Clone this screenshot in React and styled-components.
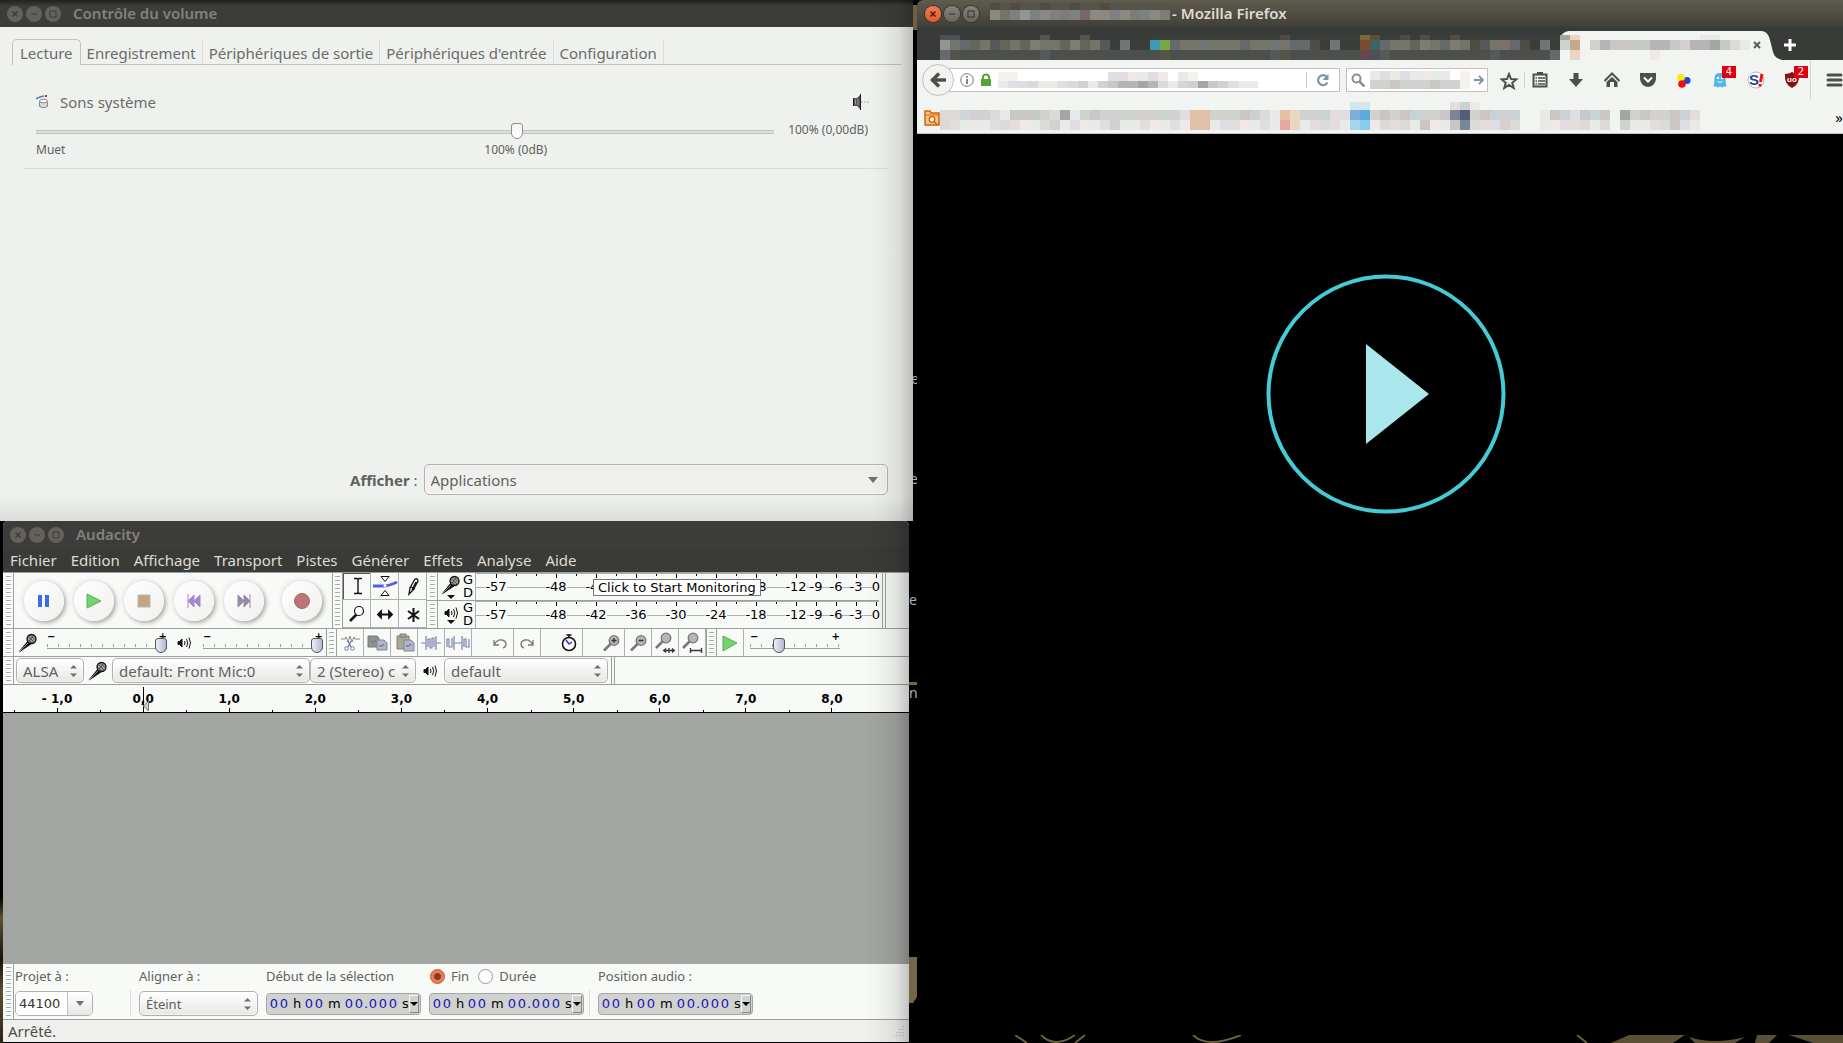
import React, { useState } from "react";
import styled, { createGlobalStyle, css } from "styled-components";

const App = () => {
  return (
    <>
      <GlobalStyle />
      <Desktop>
        <LeftColumn>
          <VolumeControl />
          <Audacity />
        </LeftColumn>
        <WallpaperGap />
        <RightColumn>
          <Firefox />
          <WallpaperFloor />
        </RightColumn>
      </Desktop>
    </>
  );
};

export default App;

/* ---------- shared pieces ---------- */

const TitleButtons = ({ active }) => (
  <TitleButtonGroup>
    <RoundButton aria-label="Fermer" $tone={active ? "close" : "off"}>
      <svg width="8" height="8" viewBox="0 0 8 8"><path d="M1.500 1.500l5 5M6.500 1.500l-5 5" stroke="currentColor" strokeWidth="1.500" /></svg>
    </RoundButton>
    <RoundButton aria-label="Réduire" $tone={active ? "on" : "off"}>
      <svg width="8" height="8" viewBox="0 0 8 8"><path d="M1 4h6" stroke="currentColor" /></svg>
    </RoundButton>
    <RoundButton aria-label="Agrandir" $tone={active ? "on" : "off"}>
      <svg width="8" height="8" viewBox="0 0 8 8"><rect x="1" y="1" width="6" height="6" fill="none" stroke="currentColor" /></svg>
    </RoundButton>
  </TitleButtonGroup>
);

const palette = {
  a: "#dcd9d9", b: "#cfd5d8", c: "#d5d0d0", d: "#d0d2cf", e: "#e8eae7", f: "#c6c9c6",
  g: "#a4a6a4", h: "#cbc5c3", i: "#cbd2d6", j: "#e0dde5", k: "#e1c0a9", l: "#e4c1a0",
  m: "#ead5c4", n: "#7bb1d8", o: "#5cabdc", p: "#77869a", q: "#575c77", r: "#e6a79c",
  s: "#a5d5ea", t: "#89cbee", u: "#efe8e6", v: "#b5b5b5", w: "#e3dddd", x: "#f6f0ee",
  y: "#c3a88c", z: "#d3e7ee",
  A: "#93958f", B: "#707673", C: "#666a6c", D: "#757469", E: "#7e7d73", F: "#66655b",
  G: "#56595a", H: "#4f4d43", I: "#3b3d3a", J: "#3c9ab5", K: "#7ca645", L: "#7d4a2b",
  M: "#3a6560", N: "#7d6f6b", O: "#4d4f4c", P: "#7a6936", Q: "#5c5136", R: "#654750",
  S: "#504f58", T: "#8b8983", U: "#7e8082", V: "#8f877d", W: "#766867", X: "#55544b",
};

// rows: [{ h, cells }], one letter for each 10px block
const Mosaic = ({ rows }) => {
  const cols = Math.max(...rows.map((r) => r.cells.length));
  const height = rows.reduce((sum, r) => sum + r.h, 0);
  let y = 0;
  return (
    <MosaicSvg width={cols * 10} height={height} shapeRendering="crispEdges" aria-hidden="true">
      {rows.map((row, i) => {
        const top = y;
        y += row.h;
        return row.cells.split("").map((c, j) =>
          palette[c] ? <rect key={`${i}-${j}`} x={j * 10} y={top} width="10" height={row.h} fill={palette[c]} /> : null
        );
      })}
    </MosaicSvg>
  );
};

const MicIcon = () => (
  <svg width="20" height="20" viewBox="0 0 20 20">
    <path d="M1 19l9-11 3 3z" fill="#111" stroke="#111" />
    <path d="M1 19l9-9" stroke="#888" />
    <circle cx="13.500" cy="6" r="4.500" fill="#9a9c9a" stroke="#111" strokeWidth="1.300" />
    <path d="M11 4l5 5M13 2.500l4 4M10 7l4 3M11 8l5-6" stroke="#333" strokeWidth=".7" />
  </svg>
);

const SpeakerIcon = () => (
  <svg width="14" height="14" viewBox="0 0 14 14" fill="none" stroke="#111">
    <path d="M1 5.500h1.500L5 3v8L2.500 8.500H1z" fill="#111" />
    <path d="M7.500 5q1 2 0 4M9.500 3q2.500 4 0 8M12 1.500q3 5.500 0 11" />
  </svg>
);

/* ---------- volume control ---------- */

const volumeTabs = ["Lecture", "Enregistrement", "Périphériques de sortie", "Périphériques d'entrée", "Configuration"];

const VolumeControl = () => {
  const [tab, setTab] = useState("Lecture");
  const [volume, setVolume] = useState(100);

  return (
    <VolumeWindow>
      <TitleBar>
        <TitleButtons />
        <WindowTitle>Contrôle du volume</WindowTitle>
      </TitleBar>
      <VolumeBody>
        <Notebook role="tablist">
          {volumeTabs.map((t) => (
            <NotebookTab key={t} role="tab" aria-selected={t === tab} $active={t === tab} onClick={() => setTab(t)}>
              {t}
            </NotebookTab>
          ))}
          <NotebookFill />
        </Notebook>
        <Stream>
          <StreamHeader>
            <svg width="14" height="14" viewBox="0 0 14 14">
              <path d="M0 4q3-2.500 8-3" stroke="#4a7dc0" strokeWidth="1.600" fill="none" />
              <rect x="9" y="0" width="2" height="2" fill="#d02020" />
              <path d="M3.500 6.500v5q4 2.500 8 0v-5" fill="#d8dad8" stroke="#888" />
              <ellipse cx="7.500" cy="6" rx="4" ry="1.800" fill="#fff" stroke="#888" />
            </svg>
            <StreamName id="stream">Sons système</StreamName>
            <MuteButton aria-label="Couper le son">
              <svg width="16" height="16" viewBox="0 0 16 16">
                <path d="M0 4h4l3.500-3.500v15L4 12H0z" fill="#555" />
                <path d="M7.500 0v16M.5 4v8" stroke="#1a1a1a" />
                <path d="M2.500 5.500v5M5 5v6" stroke="#999" />
                <path d="M8 8h8" stroke="#aaa" strokeDasharray="2 1" />
              </svg>
            </MuteButton>
          </StreamHeader>
          <StreamSlider>
            <SliderTrack>
              <VolumeRange
                type="range"
                aria-labelledby="stream"
                max="153"
                value={volume}
                onChange={(e) => setVolume(Number(e.target.value))}
              />
              <SliderMarks>
                <span>Muet</span>
                <BaseMark>100% (0dB)</BaseMark>
              </SliderMarks>
            </SliderTrack>
            <VolumeValue>100% (0,00dB)</VolumeValue>
          </StreamSlider>
        </Stream>
        <ShowRow>
          <ShowLabel htmlFor="show"><b>Afficher</b> :</ShowLabel>
          <ComboBox $grow>
            <ComboSelect id="show" defaultValue="Applications">
              <option>Applications</option>
            </ComboSelect>
            <ComboArrow width="10" height="6" viewBox="0 0 10 6"><path d="M0 0h10l-5 6z" fill="#6e706c" /></ComboArrow>
          </ComboBox>
        </ShowRow>
      </VolumeBody>
    </VolumeWindow>
  );
};

/* ---------- audacity ---------- */

const menus = ["Fichier", "Edition", "Affichage", "Transport", "Pistes", "Générer", "Effets", "Analyse", "Aide"];

const transport = [
  { name: "Pause", art: <path d="M6 6h4v12H6zM13 6h4v12h-4z" fill="#3f6ae6" /> },
  { name: "Lecture", art: <path d="M5 5l14 7-14 7z" fill="#72d46a" stroke="#5cae58" /> },
  { name: "Arrêt", art: <path d="M6 6h12v12H6z" fill="#bfa58c" stroke="#c8b39d" /> },
  { name: "Début", art: <path d="M6 5v14M12 6v12l-6-6zM18 6v12l-6-6z" fill="#a488d0" stroke="#a488d0" /> },
  { name: "Fin", art: <path d="M18 5v14M6 6v12l6-6zM12 6v12l6-6z" fill="#988ba8" stroke="#988ba8" /> },
];

const tools = [
  { name: "Sélection", art: <path d="M10 5.500h3l1 1 1-1h3M14 6v14M10 20.500h3l1-1 1 1h3" stroke="#111" strokeWidth="1.400" fill="none" /> },
  {
    name: "Niveau",
    art: (
      <>
        <path d="M1 13h10q6 0 14-4" stroke="#5560e0" strokeWidth="3" fill="none" />
        <path d="M9 3.500h8l-4 5zM9 22.500h8l-4-5z" fill="#fff" stroke="#111" />
        <circle cx="13" cy="12.500" r="1.500" fill="#fff" />
      </>
    ),
  },
  { name: "Crayon", art: <path d="M9 21l1-6 5-9q3-1 3 2l-5 9zM11 14l4 2M12 17l4-8" stroke="#111" strokeWidth="1.300" fill="#fff" /> },
  {
    name: "Zoom",
    art: (
      <>
        <path d="M6 20l7-7" stroke="#111" strokeWidth="2.500" />
        <circle cx="15" cy="10" r="4.500" fill="#fff" stroke="#111" strokeWidth="1.200" />
      </>
    ),
  },
  { name: "Glissement", art: <path d="M6 13.500h14M9 10.500l-3 3 3 3zM17 10.500l3 3-3 3z" stroke="#111" strokeWidth="1.800" /> },
  { name: "Multi-outils", art: <path d="M13.500 7v14M8 10l11 8M19 10L8 18" stroke="#111" strokeWidth="2" /> },
];

const editGroups = [
  [
    {
      name: "Couper",
      art: (
        <>
          <path d="M4 9h4l1-2 2 5 2-6 2 6 2-5 1 2h5" stroke="#888" fill="none" />
          <path d="M14 11l-3 6M11 11l3 6" stroke="#6f78a8" strokeWidth="1.300" />
          <circle cx="9.500" cy="18.500" r="1.800" fill="none" stroke="#6f78a8" />
          <circle cx="15.500" cy="18.500" r="1.800" fill="none" stroke="#6f78a8" />
        </>
      ),
    },
    {
      name: "Copier",
      art: (
        <>
          <path d="M4 6h9l2 2v9H4z" fill="#8f918f" stroke="#777" />
          <path d="M13 10h7l3 3v7H13z" fill="#b3b6c6" stroke="#7d84a8" />
          <path d="M6 12l2-1 1 2 2-3 1 2M15 16l1-1 1 2 2-3 1 2" fill="none" stroke="#777" />
        </>
      ),
    },
    {
      name: "Coller",
      art: (
        <>
          <path d="M6 6h12v13H6z" fill="#a9a88c" stroke="#85846c" />
          <path d="M9 4h6v3H9z" fill="#aaa" stroke="#777" />
          <path d="M13 10h7l3 3v8H13z" fill="#b3b6c6" stroke="#7d84a8" />
          <path d="M15 16l1-1 1 2 2-3 1 2" fill="none" stroke="#777" />
        </>
      ),
    },
    { name: "Rogner", art: <path d="M3 13h5M18 13h5M8 6v14M18 6v14M10 17V9h2v9h2V8h2v9" stroke="#7a82ae" fill="none" strokeWidth="1.200" /> },
    { name: "Silence", art: <path d="M9 13h8M9 6v14M17 6v14M2 17V9h2v8h3V8M19 17V9h2v8h3V9" stroke="#7a82ae" fill="none" strokeWidth="1.200" /> },
  ],
  [
    { name: "Annuler", art: <path d="M7 10v5h5M7 15q3-6 8-5 4 1 4 4 0 3-3 4" stroke="#777" fill="none" strokeWidth="1.300" /> },
    { name: "Rétablir", art: <path d="M19 10v5h-5M19 15q-3-6-8-5-4 1-4 4 0 3 3 4" stroke="#777" fill="none" strokeWidth="1.300" /> },
  ],
  [
    {
      name: "Minuterie",
      art: (
        <>
          <circle cx="13" cy="14" r="6.500" fill="#fff" stroke="#111" strokeWidth="1.600" />
          <path d="M13 8V5M10.500 5h5" stroke="#111" strokeWidth="1.600" />
          <path d="M10 10l3 4 3-2" stroke="#3a30e0" fill="none" strokeWidth="1.500" />
        </>
      ),
    },
  ],
  [
    { name: "Zoom avant", art: <Lens mark="M13.500 10.500h5M16 8v5" /> },
    { name: "Zoom arrière", art: <Lens mark="M13.500 10.500h5" /> },
    { name: "Ajuster la sélection", art: <Lens high mark="M11 20.500h12M14 18.500l-2 2 2 2M20 18.500l2 2-2 2M17 18v5" /> },
    { name: "Ajuster le projet", art: <Lens high mark="M11 20.500h12M11.500 18v5M22.500 18v5" /> },
  ],
];

function Lens({ mark, high }) {
  const cx = high ? 14 : 16;
  const cy = high ? 8 : 10.5;
  return (
    <>
      <path d={`M${cx - 10} ${cy + 10}l7-7`} stroke="#777" strokeWidth="2.500" />
      <circle cx={cx} cy={cy} r="4.800" fill="#b5b7b5" stroke="#777" strokeWidth="1.300" />
      <path d={mark} stroke="#333" strokeWidth="1.300" fill="none" />
    </>
  );
}

const ToolIcon = ({ art }) => <svg width="26" height="26" viewBox="0 0 26 26">{art}</svg>;

const meterMarks = ["-57", "", "", "-48", "", "-42", "", "-36", "", "-30", "", "-24", "", "-18", "", "-12", "-9", "-6", "-3", "0"];

const Meter = ({ label, icon, tooltip }) => (
  <MeterRow>
    <Grip />
    <MeterMenu aria-label={label}>
      {icon}
      <svg width="8" height="4" viewBox="0 0 8 4"><path d="M0 0h8L4 4z" fill="#111" /></svg>
    </MeterMenu>
    <Channels><span>G</span><span>D</span></Channels>
    <MeterScale>
      {meterMarks.map((m, i) => (
        <MeterCell key={i} $major={m !== ""}>{m && <span>{m}</span>}</MeterCell>
      ))}
      {tooltip && <Tooltip role="tooltip">{tooltip}</Tooltip>}
    </MeterScale>
  </MeterRow>
);

const MixerSlider = ({ label, value, short }) => {
  const [level, setLevel] = useState(value);
  return (
    <MixerBox $short={short}>
      <MixerSigns><span>−</span><span>+</span></MixerSigns>
      <MixerRange type="range" aria-label={label} value={level} onChange={(e) => setLevel(Number(e.target.value))} />
    </MixerBox>
  );
};

const Spinner = () => (
  <ComboArrow width="7" height="12" viewBox="0 0 7 12">
    <path d="M0 3.500h7L3.500 0zM0 8.500h7L3.500 12z" fill="#6e706c" />
  </ComboArrow>
);

const DeviceSelect = ({ label, value, width }) => (
  <ComboBox $width={width} $device>
    <ComboSelect aria-label={label} defaultValue={value}>
      <option>{value}</option>
    </ComboSelect>
    <Spinner />
  </ComboBox>
);

const TimeField = ({ label }) => (
  <TimeBox>
    <TimeDigits aria-label={label}>
      {"00 h 00 m 00.000 s".split("").map((c, i) => (
        <TimeCell key={i} $char={c}>{c}</TimeCell>
      ))}
    </TimeDigits>
    <TimeMenu aria-label="Format">
      <svg width="8" height="4" viewBox="0 0 8 4"><path d="M0 0h8L4 4z" fill="#000" /></svg>
    </TimeMenu>
  </TimeBox>
);

const ruler = ["- 1,0", "0,0", "1,0", "2,0", "3,0", "4,0", "5,0", "6,0", "7,0", "8,0"];

const Audacity = () => {
  const [mode, setMode] = useState("fin");

  return (
    <AudacityWindow>
      <TitleBar $flat>
        <TitleButtons />
        <WindowTitle>Audacity</WindowTitle>
      </TitleBar>
      <MenuBar>
        {menus.map((m) => <MenuItem key={m}>{m}</MenuItem>)}
      </MenuBar>

      <TopDock>
        <Grip />
        <Transport>
          {transport.map((b) => (
            <BigButton key={b.name} aria-label={b.name}>
              <svg width="24" height="24" viewBox="0 0 24 24">{b.art}</svg>
            </BigButton>
          ))}
          <BigButton aria-label="Enregistrer" $record>
            <svg width="24" height="24" viewBox="0 0 24 24"><circle cx="12" cy="12" r="7.500" fill="#bd7478" stroke="#a5666a" /></svg>
          </BigButton>
        </Transport>
        <Grip $edge />
        <ToolGrid>
          {tools.map((t, i) => (
            <ToolButton key={t.name} aria-label={t.name} $pressed={i === 0}><ToolIcon art={t.art} /></ToolButton>
          ))}
        </ToolGrid>
        <Meters>
          <Meter label="Enregistrement" icon={<MicIcon />} tooltip="Click to Start Monitoring" />
          <Meter label="Lecture" icon={<SpeakerIcon />} />
        </Meters>
        <DockEnd />
      </TopDock>

      <DockRow>
        <Grip />
        <MixerIcon><MicIcon /></MixerIcon>
        <MixerSlider label="Volume d'enregistrement" value={100} />
        <MixerIcon><SpeakerIcon /></MixerIcon>
        <MixerSlider label="Volume de lecture" value={100} />
        <Grip $edge />
        {editGroups.map((group, i) => (
          <EditGroup key={i}>
            {group.map((b) => <ToolButton key={b.name} aria-label={b.name}><ToolIcon art={b.art} /></ToolButton>)}
          </EditGroup>
        ))}
        <Grip $edge />
        <ToolButton aria-label="Lire à vitesse">
          <ToolIcon art={<path d="M6 6l14 7-14 8z" fill="#72d46a" stroke="#5cae58" />} />
        </ToolButton>
        <MixerSlider label="Vitesse" value={30} short />
      </DockRow>

      <DockRow $devices>
        <Grip />
        <DeviceSelect label="Hôte audio" value="ALSA" width={68} />
        <MixerIcon><MicIcon /></MixerIcon>
        <DeviceSelect label="Périphérique d'enregistrement" value="default: Front Mic:0" width={198} />
        <DeviceSelect label="Canaux" value="2 (Stereo) c" width={106} />
        <MixerIcon><SpeakerIcon /></MixerIcon>
        <DeviceSelect label="Périphérique de lecture" value="default" width={164} />
        <DockEnd />
      </DockRow>

      <Ruler>
        {ruler.map((r, i) => (
          <RulerCell key={r} $cursor={i === 1}>
            {r}
            <RulerTicks />
            {i === 1 && (
              <Playhead width="6" height="12" viewBox="0 0 6 12"><path d="M5.500 1v10L.5 6z" fill="#c8cac7" stroke="#777" /></Playhead>
            )}
          </RulerCell>
        ))}
      </Ruler>
      <Tracks />

      <SelectionBar>
        <Grip />
        <RateField>
          <label htmlFor="rate">Projet à :</label>
          <RateCombo>
            <RateInput id="rate" defaultValue="44100" />
            <RateButton aria-label="Fréquences">
              <svg width="8" height="5" viewBox="0 0 8 5"><path d="M0 0h8L4 5z" fill="#6e706c" /></svg>
            </RateButton>
          </RateCombo>
        </RateField>
        <BarSeparator />
        <Field>
          <label htmlFor="snap">Aligner à :</label>
          <ComboBox $width={119} $device>
            <ComboSelect id="snap" defaultValue="Éteint"><option>Éteint</option></ComboSelect>
            <Spinner />
          </ComboBox>
        </Field>
        <Field>
          <span>Début de la sélection</span>
          <TimeField label="Début de la sélection" />
        </Field>
        <Field>
          <RadioRow>
            <RadioLabel>
              <Radio type="radio" name="mode" checked={mode === "fin"} onChange={() => setMode("fin")} />
              Fin
            </RadioLabel>
            <RadioLabel>
              <Radio type="radio" name="mode" checked={mode === "duree"} onChange={() => setMode("duree")} />
              Durée
            </RadioLabel>
          </RadioRow>
          <TimeField label="Fin de la sélection" />
        </Field>
        <BarSeparator />
        <Field>
          <span>Position audio :</span>
          <TimeField label="Position audio" />
        </Field>
      </SelectionBar>
      <StatusBar>
        Arrêté.
        <svg width="12" height="12" viewBox="0 0 12 12">
          <path d="M10 1v11M7 4v8M4 7v5M1 10v2" stroke="#b5b7b5" strokeDasharray="1 2" />
        </svg>
      </StatusBar>
    </AudacityWindow>
  );
};

/* ---------- firefox ---------- */

const tabArt = [
  [{ h: 5, cells: "SS........X...X" }, { h: 10, cells: "ABCFDGFDFEDDFEFDGIBII" }, { h: 10, cells: "CXOOOOOOOOGOOOOOOOOOO" }],
  [{ h: 5, cells: "IIIIIIIIIIIIIHIIIIIII" }, { h: 10, cells: "JKCDDBDDDCDDBDCCHIBII" }, { h: 10, cells: "OXOOOOOOOOOOGXOOOOOOO" }],
  [{ h: 5, cells: "PQIIHIHIIHIIIIIIIIII" }, { h: 10, cells: "LMCDDFEDCEDHGDNCHIBI" }, { h: 10, cells: "RSGOOOOOOOOOOGOOOOOC" }],
];

const activeArt = [
  { h: 5, cells: "gmx...........ee..." },
  { h: 10, cells: "dy.cvhhffvvfcvvgfae" },
  { h: 10, cells: ".mx......u........." },
];

const titleArt = [
  { h: 7, cells: "HXHXXHXXHXXHXXXXXX" },
  { h: 10, cells: "TDUAUTUEUWTVUTEUTE" },
];

const urlArt = [
  { h: 9, cells: "xx.........jjueju.ex......." },
  { h: 7, cells: "ejjaeujadecfvvgvaebdgfdjee" },
];

const searchArt = [
  { h: 9, cells: "ewejeuee.x" },
  { h: 9, cells: "cdhdcdhddx" },
];

const bookmarkArt = [
  { h: 8, cells: ".........................................zz........wiu" },
  { h: 10, cells: "aabcdaefffdagedfddddcdddjkkdddhiaelmdciwjnochdhiddhpqdhici..ehijfih.gdhcdhiw" },
  { h: 10, cells: "aweeejawueadejuejdeewuejukkejwuejermewawestuawaehuehpawjca..euwwaea.deewahje" },
];

const addons = [
  { name: "Marque-pages", art: <><path d="M4.500 5.500h13v12h-13zM8 4h6" stroke="#4d4f4c" strokeWidth="2" fill="none" /><path d="M9 9h7M9 12h7M9 15h7M6.500 9h1.500M6.500 12H8M6.500 15H8" stroke="#4d4f4c" strokeWidth="1.500" /></> },
  { name: "Téléchargements", art: <path d="M8.500 4h5v6H18l-7 8-7-8h4.500z" fill="#4d4f4c" /> },
  { name: "Accueil", art: <><path d="M3.500 12L11 4.500l7.500 7.500" stroke="#4d4f4c" strokeWidth="2" fill="none" /><path d="M5.500 13L11 8l5.500 5v5H13v-5H9v5H5.500z" fill="#4d4f4c" /></> },
  { name: "Pocket", art: <><path d="M3 4h16v6q-1 7-8 8-7-1-8-8z" fill="#4d4f4c" /><path d="M7 8.500l4 4 4-4" stroke="#fff" strokeWidth="2" fill="none" /></> },
  { name: "Filtres", art: <><circle cx="14" cy="11.500" r="3.500" fill="#2640d8" /><circle cx="8" cy="8.500" r="3.800" fill="#f4ee10" /><circle cx="9" cy="15" r="3.800" fill="#f01010" /></> },
  { name: "Ghostery", badge: "4", art: <><path d="M4.500 18q1-4 1-9 0-5 5.500-5t5.500 5q0 5 1 9l-2.500-1-1.500 1.500-2.500-1-2.500 1-1.500-1.500z" fill="#4db6ea" /><circle cx="9" cy="9" r="1.200" fill="#fff" /><circle cx="13" cy="9" r="1.200" fill="#fff" /><path d="M8.500 12.500q2.500 2 5 0" stroke="#fff" fill="none" /></> },
  { name: "Stylish", art: <><circle cx="11" cy="11" r="8" fill="#fff" stroke="#bbb" /><text x="4" y="16" fontFamily="Liberation Sans, sans-serif" fontSize="15" fontWeight="bold" fill="#1d4b8f">S</text><path d="M17 5l-1.500 8M15 15v2.500" stroke="#f01010" strokeWidth="3" /></> },
  { name: "uBlock", badge: "2", art: <><path d="M11 3q3 2 7 2 1 10-7 14Q3 15 4 5q4 0 7-2z" fill="#8a0f14" /><text x="6" y="13" fontFamily="Liberation Sans, sans-serif" fontSize="8" fontWeight="bold" fill="#fff">uo</text></> },
];

const Firefox = () => (
  <BrowserWindow>
    <BrowserTitle>
      <TitleButtons active />
      <TitleMosaic><Mosaic rows={titleArt} /></TitleMosaic>
      <WindowTitle $light>- Mozilla Firefox</WindowTitle>
    </BrowserTitle>
    <TabStrip>
      {tabArt.map((rows, i) => <BrowserTab key={i} aria-label={`Onglet ${i + 1}`}><Mosaic rows={rows} /></BrowserTab>)}
      <ActiveTab>
        <Mosaic rows={activeArt} />
        <TabClose aria-label="Fermer l'onglet">
          <svg width="8" height="8" viewBox="0 0 8 8"><path d="M1 1l6 6M7 1L1 7" stroke="#5a5c59" strokeWidth="2" /></svg>
        </TabClose>
      </ActiveTab>
      <svg width="22" height="29" viewBox="0 0 22 29"><path d="M0 0q7 0 9 9l3 12q2 7 10 8H0z" fill="#f2f4f1" /></svg>
      <NewTab aria-label="Nouvel onglet">
        <svg width="14" height="14" viewBox="0 0 14 14"><path d="M7 1v12M1 7h12" stroke="#fff" strokeWidth="3" /></svg>
      </NewTab>
    </TabStrip>
    <NavBar>
      <BackButton aria-label="Précédent">
        <svg width="18" height="18" viewBox="0 0 18 18"><path d="M10 2.500L3.500 9l6.500 6.500M4 9h13" stroke="#4d4f4c" strokeWidth="3.500" fill="none" /></svg>
      </BackButton>
      <UrlBar>
        <svg width="14" height="14" viewBox="0 0 14 14"><circle cx="7" cy="7" r="6.300" fill="none" stroke="#777" /><path d="M7 6v5M7 3v1.800" stroke="#777" strokeWidth="1.800" /></svg>
        <svg width="12" height="14" viewBox="0 0 12 14"><path d="M1 6h10v7H1z" fill="#55a53c" /><path d="M3 7V4q0-2.500 3-2.500T9 4v3" stroke="#55a53c" strokeWidth="2" fill="none" /></svg>
        <Mosaic rows={urlArt} />
        <ReloadButton aria-label="Actualiser">
          <svg width="14" height="14" viewBox="0 0 14 14"><path d="M11.500 9.500a5 5 0 1 1-.5-5.500" stroke="#7a96a8" strokeWidth="2.200" fill="none" /><path d="M12.500 1v6h-6z" fill="#7a96a8" /></svg>
        </ReloadButton>
      </UrlBar>
      <SearchBar>
        <svg width="14" height="14" viewBox="0 0 14 14"><circle cx="5.500" cy="5.500" r="4" fill="none" stroke="#8c8e8c" strokeWidth="2" /><path d="M8.500 8.500l5 5" stroke="#8c8e8c" strokeWidth="2.500" /></svg>
        <Mosaic rows={searchArt} />
        <svg width="10" height="10" viewBox="0 0 10 10"><path d="M0 5h8M5 1l4 4-4 4" stroke="#7a96a8" strokeWidth="1.800" fill="none" /></svg>
      </SearchBar>
      <Star aria-label="Ajouter aux marque-pages">
        <svg width="18" height="18" viewBox="0 0 18 18"><path d="M9 2l2 5 5.500.3-4.200 3.500 1.400 5.200L9 13l-4.700 3 1.400-5.200L1.500 7.300 7 7z" fill="none" stroke="#4d4f4c" strokeWidth="2" /></svg>
      </Star>
      {addons.map((a) => (
        <AddonButton key={a.name} aria-label={a.name}>
          <svg width="22" height="22" viewBox="0 0 22 22">{a.art}</svg>
          {a.badge && <Badge>{a.badge}</Badge>}
        </AddonButton>
      ))}
      <Hamburger aria-label="Menu">
        <svg width="17" height="14" viewBox="0 0 17 14"><path d="M2 2h13M2 7h13M2 12h13" stroke="#4d4f4c" strokeWidth="3" strokeLinecap="round" /></svg>
      </Hamburger>
    </NavBar>
    <BookmarkBar>
      <svg width="16" height="16" viewBox="0 0 16 16">
        <path d="M1 15V1h5l1 2h8v12z" fill="#f3c88c" stroke="#cf6408" strokeWidth="1.500" />
        <path d="M1 5h14" stroke="#cf6408" />
        <circle cx="8" cy="9.500" r="2.800" fill="#fff3e0" stroke="#cf6408" strokeWidth="1.300" />
        <path d="M10 11.500l3 3" stroke="#cf6408" strokeWidth="1.500" />
      </svg>
      <Mosaic rows={bookmarkArt} />
      <Overflow aria-label="Plus de marque-pages">»</Overflow>
    </BookmarkBar>
    <Page>
      <PlayButton aria-label="Lire la vidéo">
        <svg width="240" height="240" viewBox="0 0 240 240">
          <circle cx="120" cy="120" r="117.500" fill="none" stroke="#43ccd6" strokeWidth="4" />
          <path d="M100 70l63 50-63 50z" fill="#a9e7ec" />
        </svg>
      </PlayButton>
    </Page>
  </BrowserWindow>
);

/* ---------- wallpaper ---------- */

const WallpaperGap = () => (
  <GapSvg width="4" height="1043" aria-hidden="true">
    <path d="M0 5h4v25H0z" fill="#6b6040" />
    <path d="M-4 682h8v3h-8zM-4 957h8v40l-4 6h-4z" fill="#746748" />
    <g fontFamily="Noto Sans, sans-serif" fontSize="14" fill="#a9aeb4">
      <text x="-2" y="384">e</text>
      <text x="-3" y="484">e</text>
      <text x="-4" y="605">e</text>
      <text x="-4" y="698">n</text>
    </g>
  </GapSvg>
);

const WallpaperFloor = () => (
  <svg width="100%" height="8" viewBox="0 0 926 8" preserveAspectRatio="xMidYMid slice" aria-hidden="true">
    <g stroke="#6b5f3e" strokeWidth="2" fill="none">
      <path d="M98 0l12 8M124 0q14 14 34 0M168 0l-10 8M276 0q14 14 48 0M660 0l10 8M700 8l16-8" />
    </g>
    <path d="M712 0h56l-12 8h-62zM772 2q24 8 56 0l-10 6h-40zM840 0h20l-8 8h-14zM872 0h54v8h-30z" fill="#5b5036" />
  </svg>
);

/* ---------- styles ---------- */

const ui = `"Noto Sans", "Open Sans", sans-serif`;
const dejavu = `"DejaVu Sans", sans-serif`;

const GlobalStyle = createGlobalStyle`
  *, *::before, *::after {
    box-sizing: border-box;
  }
  body {
    margin: 0;
    background: #000;
    font-family: ${ui};
    font-size: 15px;
    color: #5f615d;
    overflow: hidden;
  }
  button {
    border: 0;
    padding: 0;
    background: none;
    font: inherit;
    color: inherit;
  }
  svg {
    display: block;
    flex: none;
  }
`;

const Desktop = styled.div`
  display: grid;
  grid-template-columns: minmax(0, 913fr) 4px minmax(0, 926fr);
  min-height: 100vh;
  background: #000;
`;

const GapSvg = styled.svg`
  overflow: visible;
`;

const LeftColumn = styled.div`
  display: flex;
  flex-direction: column;
  background: linear-gradient(#000 86%, #5b5036 88%, #17140e 92%, #5b5036 95%, #2a2417) left / 3px 100% no-repeat;
`;

const RightColumn = styled.div`
  z-index: 1;
  display: flex;
  flex-direction: column;
  overflow: hidden;
  background: #000;
`;

const windowBase = css`
  position: relative;
  z-index: 1;
  display: flex;
  flex-direction: column;

  /* shade cast by the browser window */
  &::after {
    content: "";
    position: absolute;
    inset: 0;
    pointer-events: none;
    background: linear-gradient(to left, rgba(0, 0, 0, 0.22), rgba(0, 0, 0, 0.08) 14px, rgba(0, 0, 0, 0.02) 32px, transparent 46px);
  }
`;

const VolumeWindow = styled.section`
  ${windowBase}
  height: 521px;
  background: linear-gradient(#eff1ee 95%, #dcdedb);
`;

const AudacityWindow = styled.section`
  ${windowBase}
  flex: 1;
  margin: 0 4px 1px 3px;
  background: #f8faf7;
  border-radius: 5px 5px 0 0;
  overflow: hidden;
`;

const TitleBar = styled.header`
  display: flex;
  align-items: center;
  gap: 12px;
  height: 27px;
  padding: 0 7px;
  background: ${(p) => (p.$flat ? "#3c3d3a" : "linear-gradient(#20211e, #3c3d3a 6px)")};
`;

const TitleButtonGroup = styled.div`
  display: flex;
  gap: 3px;
`;

const tones = {
  off: "background: #64615a; color: #3c3d3a;",
  on: "background: linear-gradient(#86847b, #67655d); color: #35352f; box-shadow: 0 0 0 1px #35352f;",
  close: "background: linear-gradient(#f27c52, #e25a2c); color: #4b1c0c; box-shadow: 0 0 0 1px #35352f;",
};

const RoundButton = styled.button`
  display: grid;
  place-items: center;
  width: 16px;
  height: 16px;
  border-radius: 50%;
  ${(p) => tones[p.$tone]}
`;

const WindowTitle = styled.h1`
  margin: 0;
  padding-bottom: 2px;
  font-size: 15px;
  font-weight: 600;
  line-height: 20px;
  color: ${(p) => (p.$light ? "#dfdbd2" : "#85817a")};
`;

const VolumeBody = styled.div`
  flex: 1;
  display: flex;
  flex-direction: column;
  padding: 12px 12px 26px;
`;

const Notebook = styled.div`
  display: flex;
  height: 26px;
`;

const NotebookTab = styled.button`
  padding: 0 6px;
  line-height: 28px;
  color: #6a6c68;
  white-space: nowrap;
  ${(p) =>
    p.$active
      ? "padding: 0 7px; line-height: 26px; border: 1px solid #c8bfbf; border-bottom: 0; border-radius: 5px 5px 0 0;"
      : "border-bottom: 1px solid #c8bfbf; border-right: 1px solid #dedbda;"}
`;

const NotebookFill = styled.div`
  flex: 1;
  border-bottom: 1px solid #c8bfbf;
`;

const Stream = styled.div`
  margin: 24px 12px 0;
  padding: 0 0 8px 12px;
  height: 80px;
  border-bottom: 1px solid #d9d9d6;
`;

const StreamHeader = styled.div`
  display: flex;
  align-items: center;
  gap: 10px;
  height: 25px;
  padding-right: 20px;
`;

const StreamName = styled.span`
  flex: 1;
  color: #6a6c68;
`;

const MuteButton = styled.button`
  display: block;
`;

const StreamSlider = styled.div`
  display: flex;
  gap: 14px;
  padding: 9px 21px 0 0;
  font-size: 12px;
`;

const SliderTrack = styled.div`
  flex: 1;
`;

const VolumeRange = styled.input`
  appearance: none;
  display: block;
  width: 100%;
  height: 16px;
  margin: 0;
  border-radius: 2px;
  background: linear-gradient(#dcdedb, #dcdedb) 0 7px / 100% 4px no-repeat;

  &::-webkit-slider-runnable-track {
    height: 16px;
    background:
      linear-gradient(#c0c2bf, #c0c2bf) 0 7px / 100% 1px no-repeat,
      linear-gradient(#c0c2bf, #c0c2bf) 0 10px / 100% 1px no-repeat;
  }
  &::-webkit-slider-thumb {
    appearance: none;
    width: 12px;
    height: 16px;
    border: 1px solid #8e908d;
    border-radius: 3px 3px 6px 6px;
    background: linear-gradient(#f4f5f3, #fff);
  }
`;

const SliderMarks = styled.div`
  display: grid;
  grid-template-columns: 30px 1fr;
  margin-top: 3px;
  line-height: 16px;
`;

const BaseMark = styled.span`
  margin-left: calc(65% - 42px);
`;

const VolumeValue = styled.span`
  line-height: 14px;
`;

const ShowRow = styled.div`
  display: flex;
  align-items: center;
  gap: 6px;
  margin-top: auto;
  padding: 0 13px 0 338px;
`;

const ShowLabel = styled.label`
  white-space: nowrap;
`;

const ComboBox = styled.div`
  display: grid;
  grid-template-columns: 1fr auto;
  align-items: center;
  height: ${(p) => (p.$device ? "25px" : "31px")};
  width: ${(p) => (p.$width ? `${p.$width}px` : "auto")};
  ${(p) => p.$grow && "flex: 1;"}
  padding-right: ${(p) => (p.$device ? "6px" : "9px")};
  border: 1px solid #b5aeae;
  border-radius: 5px;
  background: ${(p) => (p.$device ? "linear-gradient(#fff, #e6e8e5)" : "linear-gradient(#edefec, #f1f2f0)")};
  box-shadow: inset 0 0 0 1px rgba(255, 255, 255, 0.5);
`;

const ComboSelect = styled.select`
  appearance: none;
  min-width: 0;
  width: 100%;
  border: 0;
  padding: 0 0 0 6px;
  background: none;
  font: inherit;
  color: inherit;
`;

const ComboArrow = styled.svg`
  pointer-events: none;
`;

const MenuBar = styled.nav`
  display: flex;
  gap: 14px;
  height: 24px;
  padding: 0 7px;
  background: #3a3b38;
`;

const MenuItem = styled.button`
  line-height: 24px;
  color: #dfdbd2;
`;

const TopDock = styled.div`
  display: flex;
  height: 57px;
  border-top: 1px solid #9d9f9c;
  border-bottom: 1px solid #9d9f9c;
`;

const DockRow = styled.div`
  display: flex;
  align-items: center;
  height: 28px;
  border-bottom: 1px solid #9d9f9c;
  ${(p) => p.$devices && "& > div:first-child { margin-right: 2px; }"}
`;

const Grip = styled.div`
  flex: none;
  align-self: stretch;
  width: 11px;
  border-right: 1px solid #9d9f9c;
  border-left: 1px solid ${(p) => (p.$edge ? "#9d9f9c" : "transparent")};
  padding: 3px 2px;
  background: repeating-linear-gradient(#aaacaa 0 1px, transparent 1px 4px) content-box;
`;

const Transport = styled.div`
  display: flex;
  align-items: center;
  gap: 10px;
  padding: 0 10px;
`;

const BigButton = styled.button`
  display: grid;
  place-items: center;
  width: 40px;
  height: 40px;
  margin-left: ${(p) => (p.$record ? "8px" : "0")};
  border-radius: 50%;
  background: linear-gradient(135deg, #fff, #f0f0ef);
  box-shadow: 2px 2px 4px #a9aba8, -2px -2px 4px #ececea;
`;

const ToolGrid = styled.div`
  display: grid;
  grid-template-columns: repeat(3, 28px);
  grid-template-rows: 27px 28px;
`;

const ToolButton = styled.button`
  display: grid;
  place-items: center;
  align-self: stretch;
  width: 27px;
  border-right: 1px solid #aeb0ad;
  ${ToolGrid} & {
    width: 28px;
    border-bottom: 1px solid #aeb0ad;
  }
  ${(p) => p.$pressed && "box-shadow: inset 1px 1px 0 #555;"}
`;

const Meters = styled.div`
  flex: 1;
  max-width: 452px;
  display: grid;
  grid-template-columns: minmax(0, 1fr);
  grid-template-rows: 27px 28px;
`;

const MeterRow = styled.div`
  display: flex;
  min-width: 0;
  & + & {
    border-top: 1px solid #9d9f9c;
  }
`;

const MeterMenu = styled.button`
  flex: none;
  display: flex;
  flex-direction: column;
  align-items: center;
  justify-content: center;
  width: 25px;
`;

const Channels = styled.div`
  flex: none;
  display: flex;
  flex-direction: column;
  width: 12px;
  font: 13px/13px ${dejavu};
  color: #000;
`;

const MeterScale = styled.div`
  position: relative;
  flex: 1;
  min-width: 0;
  display: grid;
  grid-template-columns: repeat(20, 20px);
  padding-left: 10px;
  border: 1px solid #aeb0ad;
  border-width: 1px 0 0 1px;
  background: linear-gradient(#aeb0ad, #aeb0ad) 0 13px / 100% 1px no-repeat;
  font: 13px/25px ${dejavu};
  color: #000;
`;

const MeterCell = styled.span`
  display: flex;
  justify-content: center;
  align-items: center;
  background: linear-gradient(#000, #000) 50% 0 / 1px ${(p) => (p.$major ? "4px" : "2px")} no-repeat;

  span {
    line-height: 14px;
    background: #f8faf7;
  }
`;

const Tooltip = styled.div`
  position: absolute;
  left: 117px;
  top: 5px;
  padding: 0 4px;
  border: 1px solid #777;
  background: #fff;
  line-height: 15px;
  white-space: nowrap;
`;

const DockEnd = styled.div`
  align-self: stretch;
  width: 4px;
  margin-left: 3px;
  border: 1px solid #9d9f9c;
  border-width: 0 1px;
`;

const MixerIcon = styled.span`
  display: grid;
  place-items: center;
  width: 28px;
`;

const MixerBox = styled.div`
  display: flex;
  flex-direction: column;
  width: ${(p) => (p.$short ? "90px" : "120px")};
  margin: ${(p) => (p.$short ? "0 0 0 6px" : "0 3px 0 5px")};
`;

const MixerSigns = styled.div`
  display: flex;
  justify-content: space-between;
  height: 8px;
  font: 700 10px/10px ${dejavu};
  color: #000;
`;

const MixerRange = styled.input`
  appearance: none;
  display: block;
  width: 100%;
  height: 16px;
  margin: -3px 0 0;
  background:
    linear-gradient(#9d9f9c, #9d9f9c) 0 11px / 100% 1px no-repeat,
    repeating-linear-gradient(90deg, #9d9f9c 0 1px, transparent 1px 11px) 0 7px / 100% 3px no-repeat;

  &::-webkit-slider-thumb {
    appearance: none;
    width: 12px;
    height: 15px;
    border: 1px solid #555;
    border-radius: 3px 3px 6px 6px;
    background: linear-gradient(90deg, #eceef8, #b4b8d0);
  }
`;

const EditGroup = styled.div`
  display: flex;
  align-self: stretch;
  & + & {
    margin-left: 15px;
  }
`;

const Ruler = styled.div`
  display: grid;
  grid-template-columns: repeat(10, 1fr);
  height: 28px;
  padding: 2px 34px 0 11px;
  border-bottom: 1px solid #000;
  font: 700 12px/24px ${dejavu};
  color: #000;
  text-align: center;
`;

const RulerCell = styled.div`
  position: relative;
  display: flex;
  flex-direction: column;
  justify-content: space-between;
  ${(p) => p.$cursor && "background: linear-gradient(#000, #000) 50% 0 / 1px 25px no-repeat;"}
  line-height: 24px;
`;

const RulerTicks = styled.i`
  height: 4px;
  margin-top: -3px;
  background:
    linear-gradient(#000, #000) 50% 0 / 1px 4px no-repeat,
    linear-gradient(#000, #000) 0 2px / 1px 2px no-repeat;
`;

const Playhead = styled.svg`
  position: absolute;
  left: 50%;
  bottom: 0;
`;

const Tracks = styled.div`
  flex: 1;
  background: #a3a5a2;
`;

const SelectionBar = styled.div`
  display: flex;
  height: 56px;
  border-bottom: 1px solid #9d9f9c;
  font-size: 13px;
`;

const Field = styled.div`
  display: flex;
  flex-direction: column;
  justify-content: space-between;
  padding: 3px 0 3px 8px;
  line-height: 18px;
`;

const RateField = styled(Field)`
  padding-left: 1px;
  width: 116px;
`;

const RateCombo = styled.div`
  display: flex;
  width: 78px;
  height: 25px;
  border: 1px solid #b5aeae;
  border-radius: 5px;
  overflow: hidden;
`;

const RateInput = styled.input`
  width: 52px;
  border: 0;
  border-right: 1px solid #c5c0c0;
  padding: 0 0 0 3px;
  background: #fff;
  font: 13px ${dejavu};
  color: #333;
`;

const RateButton = styled.button`
  flex: 1;
  display: grid;
  place-items: center;
  background: linear-gradient(#fff, #e6e8e5);
`;

const BarSeparator = styled.div`
  align-self: flex-end;
  width: 1px;
  height: 26px;
  margin: 0 0 3px 5px;
  background: #dddfdc;
  ${RateField} + & {
    margin-left: 0;
  }
`;

const RadioRow = styled.div`
  display: flex;
  gap: 8px;
`;

const RadioLabel = styled.label`
  display: flex;
  align-items: center;
  gap: 6px;
`;

const Radio = styled.input`
  appearance: none;
  width: 15px;
  height: 15px;
  margin: 0 0 0 1px;
  border: 1px solid #999;
  border-radius: 50%;
  background: #fff;

  &:checked {
    border-color: #c9532c;
    background: radial-gradient(circle, #7d3f28 0 3px, #ee7d55 4px);
  }
`;

const TimeBox = styled.div`
  display: flex;
  width: 155px;
  height: 22px;
  margin-bottom: 1px;
  border: 1px solid #a5a7a4;
  border-radius: 4px;
  padding: 1px;
  background: #d0d2cf;
`;

const TimeDigits = styled.output`
  flex: 1;
  display: flex;
  min-width: 0;
  padding-left: 1px;
  font: 13px/18px ${dejavu};
`;

const cellWidth = (c) => {
  if (c === " " || c === ".") return 4;
  if (c === "m") return 12;
  return c === "0" ? 10 : 7;
};

const TimeCell = styled.span`
  flex: none;
  width: ${(p) => cellWidth(p.$char)}px;
  white-space: pre;
  text-align: center;
  color: ${(p) => (/[0.]/.test(p.$char) ? "#1a10b8" : "#000")};
`;

const TimeMenu = styled.button`
  display: grid;
  place-items: center;
  width: 10px;
  border: 1px solid #f4f5f3;
  border-right-color: #888;
  border-bottom-color: #888;
`;

const StatusBar = styled.footer`
  display: flex;
  align-items: center;
  justify-content: space-between;
  height: 22px;
  padding: 0 4px 0 5px;
  background: #eff0ee;
  color: #4b4d4a;
`;

const BrowserWindow = styled.section`
  flex: 1;
  display: flex;
  flex-direction: column;
`;

const BrowserTitle = styled.header`
  display: flex;
  align-items: center;
  height: 27px;
  padding-left: 8px;
  border-radius: 6px 0 0 0;
  background: linear-gradient(#5f5b4d, #403f39);
`;

const TitleMosaic = styled.span`
  align-self: flex-start;
  padding: 3px 2px 0 11px;
`;

const MosaicSvg = styled.svg`
  flex: none;
`;

const TabStrip = styled.div`
  display: flex;
  align-items: flex-end;
  height: 33px;
  padding-left: 23px;
  background: #393b38;
`;

const BrowserTab = styled.button`
  flex: none;
`;

const ActiveTab = styled.div`
  display: flex;
  align-items: flex-end;
  height: 29px;
  border-radius: 9px 0 0 0;
  background: #f2f4f1;
`;

const TabClose = styled.button`
  padding: 0 0 11px 3px;
`;

const NewTab = styled.button`
  padding: 0 0 8px;
`;

const NavBar = styled.div`
  display: flex;
  align-items: center;
  height: 40px;
  padding-left: 5px;
  background: #f2f4f1;
`;

const BackButton = styled.button`
  z-index: 1;
  flex: none;
  display: grid;
  place-items: center;
  width: 32px;
  height: 32px;
  border: 1px solid #c8c0c0;
  border-radius: 50%;
  background: #f2f4f1;
`;

const UrlBar = styled.div`
  flex: 1;
  display: flex;
  align-items: center;
  gap: 6px;
  height: 24px;
  margin-left: -5px;
  padding-left: 10px;
  border: 1px solid #c8c0c0;
  background: #fff;
`;

const ReloadButton = styled.button`
  display: grid;
  place-items: center;
  width: 33px;
  height: 16px;
  margin-left: auto;
  border-left: 1px solid #c8c8c8;
`;

const SearchBar = styled.div`
  display: flex;
  align-items: center;
  justify-content: space-between;
  width: 142px;
  height: 24px;
  margin-left: 6px;
  padding: 0 3px 0 4px;
  border: 1px solid #c8c0c0;
  background: #fff;
`;

const Star = styled.button`
  display: grid;
  place-items: center;
  width: 37px;
  height: 16px;
  margin-right: -3px;
  padding-left: 5px;
  border-right: 1px solid #d2d4d1;
`;

const AddonButton = styled.button`
  position: relative;
  display: grid;
  place-items: center;
  width: 36px;
  height: 32px;
`;

const Badge = styled.span`
  position: absolute;
  left: 20px;
  top: 2px;
  width: 14px;
  background: #e00010;
  color: #fff;
  font: 10px/12px ${dejavu};
  text-align: center;
`;

const Hamburger = styled.button`
  height: 38px;
  padding-left: 15px;
  border-left: 1px solid #d2d4d1;
`;

const BookmarkBar = styled.div`
  display: flex;
  align-items: flex-end;
  height: 34px;
  padding: 0 0 3px 7px;
  border-bottom: 1px solid #c8c8c5;
  background: #f2f4f1;

  & > svg:first-child {
    margin-bottom: 4px;
  }
`;

const Overflow = styled.button`
  margin: 0 0 5px auto;
  line-height: 16px;
  color: #000;
`;

const Page = styled.main`
  flex: 1;
  padding: 140px 0 0 12px;
  background: #000;
  text-align: center;
`;

const PlayButton = styled.button`
  display: inline-block;
`;
